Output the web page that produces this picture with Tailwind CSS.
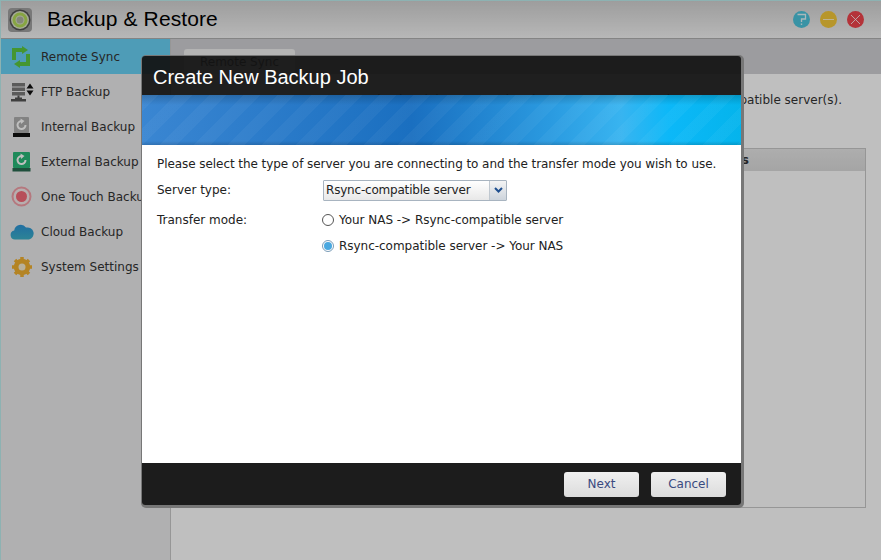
<!DOCTYPE html>
<html lang="en">
<head>
    <meta charset="UTF-8">
    <title>Backup &amp; Restore</title>
    <script src="https://cdn.jsdelivr.net/npm/@tailwindcss/browser@4"></script>
</head>
<body class="relative w-[881px] h-[560px] overflow-hidden bg-white text-[12px] text-[#333] font-['DejaVu_Sans',sans-serif]">

    <!-- App window -->
    <div class="flex flex-col h-full border-t border-l border-[#bdeeee]">
        <header class="flex items-center h-[38px] shrink-0 pl-[7px] pr-[17px] bg-gradient-to-b from-[#d2d2d2] to-[#f5f5f5] border-b border-[#b0b0b0]">
            <div class="w-[24px] h-[24px] rounded-[4px] bg-[#a0a0a0] flex items-center justify-center">
                <svg width="22" height="22" viewBox="0 0 22 22"><circle cx="11" cy="11" r="10.500" fill="#555"/><circle cx="11" cy="11" r="9" fill="#dce4c8"/><circle cx="11" cy="11" r="6" fill="none" stroke="#b4dc58" stroke-width="3"/><circle cx="11" cy="11" r="3.500" fill="#b0b4a0"/></svg>
            </div>
            <h1 class="ml-[15px] -mt-px text-[21px] tracking-[0.1px] text-black font-['Liberation_Sans',sans-serif]">Backup &amp; Restore</h1>
            <div class="ml-auto flex gap-[10px]">
                <div class="w-[17px] h-[17px] rounded-full bg-[#4dc4dc] flex items-center justify-center">
                    <svg width="11" height="13" viewBox="0 0 11 13"><path d="M1.500 1.500h8v4.500h-4v3" fill="none" stroke="#fff" stroke-opacity=".85" stroke-width="1.300"/><path d="M4.800 10.500h1.400v1.400H4.800z" fill="#fff" fill-opacity=".85"/></svg>
                </div>
                <div class="w-[17px] h-[17px] rounded-full bg-[#f5c83a] flex items-center justify-center"><div class="w-[11px] h-px bg-white/70"></div></div>
                <div class="w-[17px] h-[17px] rounded-full bg-[#f0444c] flex items-center justify-center">
                    <svg width="11" height="11" viewBox="0 0 11 11"><path d="M1 1l9 9M10 1l-9 9" stroke="#fff" stroke-opacity=".8" fill="none"/></svg>
                </div>
            </div>
        </header>

        <div class="flex flex-1 min-h-0">
            <!-- Sidebar -->
            <nav class="w-[170px] shrink-0 bg-[#ebebed] border-r border-[#c8c8c8]">
                <a class="flex items-center h-[35px] bg-[#69d0f5] text-[#333]">
                    <svg class="ml-[10px] w-[20px] h-[22px]" viewBox="0 0 20 22" fill="none" stroke="#5dc840" stroke-width="4"><path d="M3 14V4h9"/><path d="M17 8v10H8"/><path d="M11 0l6 4-6 4zM9 14l-6 4 6 4z" fill="#5dc840" stroke="none"/></svg>
                    <span class="ml-[10px]">Remote Sync</span>
                </a>
                <a class="flex items-center h-[35px]">
                    <svg class="ml-[10px] w-[23px] h-[20px]" viewBox="0 0 23 20" fill="#7a7a7a"><path d="M1 1h13v3.500H1zM1 5.500h13V9H1zM1 10h13v3.500H1z"/><path d="M6.500 13.500h2V17h-2zM0 17h15v2.500H0zM4 15.500h7V17H4z" fill="#555"/><path d="M19 1.500l3.500 5h-7zM19 13.500l-3.500-5h7z" fill="#111"/></svg>
                    <span class="ml-[7px]">FTP Backup</span>
                </a>
                <a class="flex items-center h-[35px]">
                    <svg class="ml-[12px] w-[17px] h-[20px]" viewBox="0 0 17 20"><rect x="1" y="0" width="15" height="16" rx="1" fill="#aeaeae"/><path d="M12.500 8a4 4 0 1 1-3-3.800" fill="none" stroke="#fff" stroke-width="2"/><path d="M7.500 1.500l4 2.500-3.500 3z" fill="#fff"/><rect x="0" y="16" width="17" height="4" fill="#111"/></svg>
                    <span class="ml-[11px]">Internal Backup</span>
                </a>
                <a class="flex items-center h-[35px]">
                    <svg class="ml-[11px] w-[19px] h-[20px]" viewBox="0 0 19 20"><rect x="1" y="0" width="17" height="16" rx="1" fill="#28b878"/><path d="M13.500 8a4 4 0 1 1-3-3.800" fill="none" stroke="#fff" stroke-width="2"/><path d="M8.500 1.500l4 2.500-3.500 3z" fill="#fff"/><rect x="0.500" y="16" width="18" height="3.500" fill="#2a6a50"/></svg>
                    <span class="ml-[10px]">External Backup</span>
                </a>
                <a class="flex items-center h-[35px]">
                    <svg class="ml-[10px] w-[21px] h-[21px]" viewBox="0 0 21 21"><circle cx="10.500" cy="10.500" r="9" fill="#f4eaea" stroke="#f2a0a8" stroke-width="2"/><circle cx="10.500" cy="10.500" r="5.500" fill="#f46a78"/></svg>
                    <span class="ml-[9px]">One Touch Backup</span>
                </a>
                <a class="flex items-center h-[35px]">
                    <svg class="ml-[9px] w-[24px] h-[18px]" viewBox="0 0 24 18"><defs><linearGradient id="cloudFill" x1="0" y1="0" x2="0" y2="1"><stop offset="0" stop-color="#2c94d8"/><stop offset="1" stop-color="#3cb0c8"/></linearGradient></defs><path d="M5 16.500a4.500 4.500 0 0 1-.8-8.900A6.500 6.500 0 0 1 16 4.600a5.500 5.500 0 0 1 3 11.900z" fill="url(#cloudFill)"/></svg>
                    <span class="ml-[7px]">Cloud Backup</span>
                </a>
                <a class="flex items-center h-[35px]">
                    <svg class="ml-[10px] w-[22px] h-[22px]" viewBox="0 0 22 22"><circle cx="11" cy="11" r="6" fill="none" stroke="#f0b030" stroke-width="4.500"/><path d="M11 1v20M1 11h20M4 4l14 14M18 4L4 18" stroke="#f0b030" stroke-width="3.500"/><circle cx="11" cy="11" r="3.500" fill="#f6ecd0"/></svg>
                    <span class="ml-[8px]">System Settings</span>
                </a>
            </nav>

            <!-- Main -->
            <main class="flex-1 flex flex-col min-w-0">
                <div class="h-[35px] shrink-0 bg-[#d0d0d4] pl-[13px] pt-[10px]">
                    <div class="w-[111px] h-[25px] rounded-t-[3px] bg-[#f0f0f0] flex items-start justify-center pt-[4px]">Remote Sync</div>
                </div>
                <p class="mt-[17px] pr-[39px] text-right whitespace-nowrap">Create backup jobs to copy data between your NAS and Rsync-compatible server(s).</p>
                <div class="mt-[39px] ml-[12px] mr-[15px] h-[360px] border border-[#c8c8c8]">
                    <div class="flex justify-end h-[22px] bg-gradient-to-b from-[#e8e8e8] to-[#dcdcdc] pr-[116px] font-bold leading-[22px]">Status</div>
                </div>
            </main>
        </div>
    </div>

    <!-- Modal dim -->
    <div class="absolute inset-0 bg-black/25"></div>

    <!-- Dialog -->
    <div class="absolute left-[142px] top-[56px] w-[599px] h-[449px] flex flex-col rounded-[3px] overflow-hidden shadow-[1px_1px_0_2px_#777]">
        <div class="h-[39px] shrink-0 bg-[#121212]/93 pl-[11px] text-[20px] leading-[42px] text-white font-['Liberation_Sans',sans-serif]">Create New Backup Job</div>
        <div class="h-[50px] shrink-0 bg-[repeating-linear-gradient(135deg,rgba(255,255,255,0.04)_0_12px,rgba(255,255,255,0)_12px_24px),linear-gradient(to_bottom,rgba(0,0,0,0.18),rgba(0,0,0,0)_20%,rgba(0,0,0,0)_92%,rgba(0,0,0,0.15)),linear-gradient(to_right,#3a86d2,#1a6fc0_45%,#2a9ae0_68%,#38b4f0_80%,#0cb8f8_88%,#04b4ec)]"></div>
        <div class="flex-1 bg-white px-[15px] pt-[10px] text-[#222]">
            <p class="whitespace-nowrap tracking-[-0.065px]">Please select the type of server you are connecting to and the transfer mode you wish to use.</p>
            <div class="flex items-center mt-[7px] h-[20px]">
                <span class="w-[166px]">Server type:</span>
                <div class="flex w-[184px] h-[21px] border border-[#a8b4c0] rounded-[1px]">
                    <span class="flex-1 pl-[2px] leading-[19px] tracking-[-0.2px] bg-gradient-to-b from-white to-[#e8e8e8]">Rsync-compatible server</span>
                    <span class="w-[17px] flex items-center justify-center border-l border-[#c0c8d0] bg-gradient-to-b from-[#f4f4f4] to-[#cdd4dc]">
                        <svg width="9" height="6" viewBox="0 0 9 6"><path d="M1 1l3.500 3.500L8 1" fill="none" stroke="#1f4f8f" stroke-width="2"/></svg>
                    </span>
                </div>
            </div>
            <div class="flex mt-[10px]">
                <span class="w-[165px] leading-[20px]">Transfer mode:</span>
                <div class="flex flex-col gap-[6px] tracking-[-0.03px]">
                    <label class="flex items-center h-[20px] gap-[5px]">
                        <span class="w-[12px] h-[12px] rounded-full border border-[#555] bg-white"></span>
                        Your NAS -&gt; Rsync-compatible server
                    </label>
                    <label class="flex items-center h-[20px] gap-[5px]">
                        <span class="w-[12px] h-[12px] rounded-full border border-[#7a9cb8] bg-white flex items-center justify-center"><span class="w-[8px] h-[8px] rounded-full bg-[#4aa8e0]"></span></span>
                        Rsync-compatible server -&gt; Your NAS
                    </label>
                </div>
            </div>
        </div>
        <div class="h-[42px] shrink-0 bg-[#1c1c1c] flex items-center justify-end gap-[12px] pr-[15px]">
            <button class="w-[75px] h-[25px] rounded-[3px] bg-gradient-to-b from-[#f0f0f0] to-[#dcdcdc] text-[#3a4a80]">Next</button>
            <button class="w-[75px] h-[25px] rounded-[3px] bg-gradient-to-b from-[#f0f0f0] to-[#dcdcdc] text-[#3a4a80]">Cancel</button>
        </div>
    </div>
</body>
</html>
